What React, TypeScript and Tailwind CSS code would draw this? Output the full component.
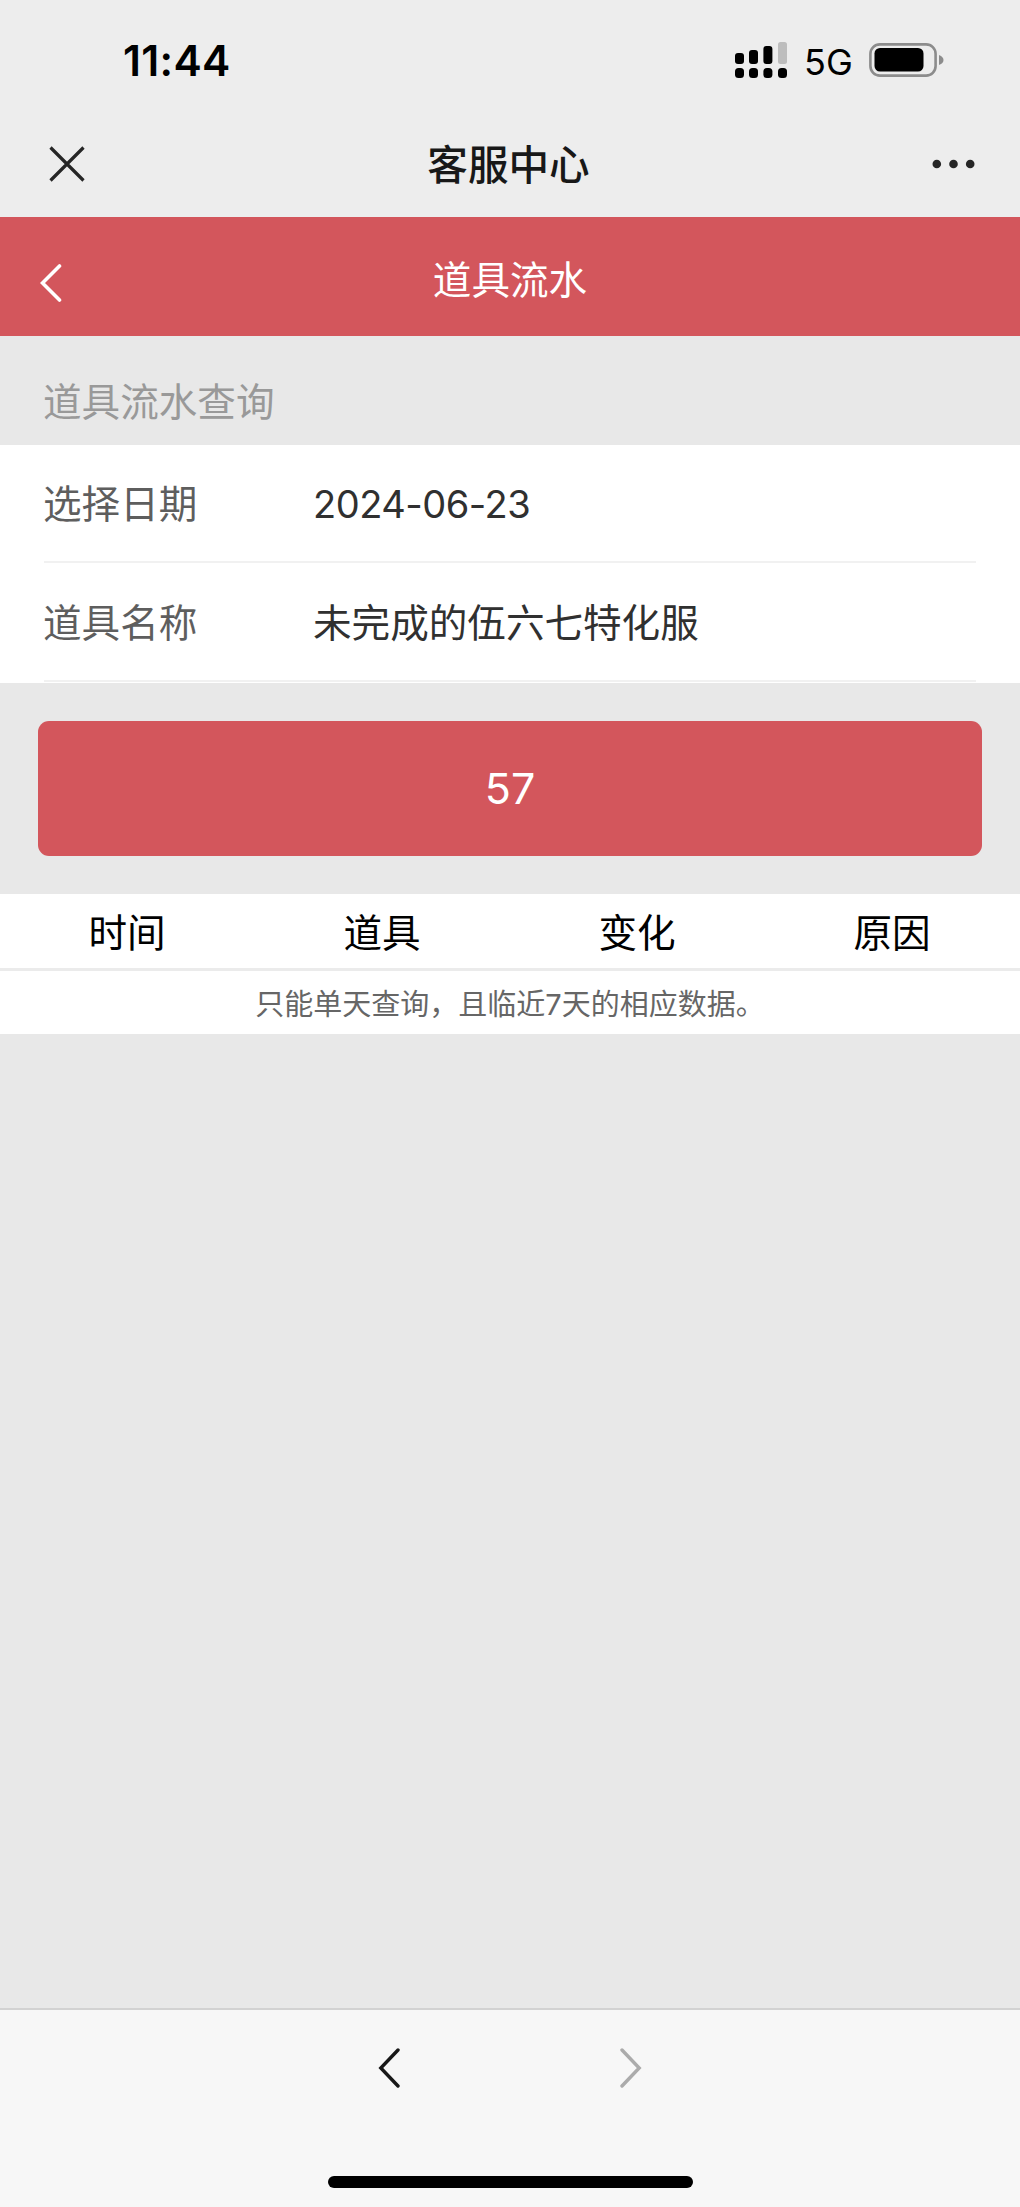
import clsx from "clsx";

const FIELDS = [
  { label: "选择日期", value: "2024-06-23", numeric: true },
  { label: "道具名称", value: "未完成的伍六七特化服", numeric: false },
];

const COLUMNS = ["时间", "道具", "变化", "原因"];

function StatusBar() {
  return (
    <div className="flex h-[112px] items-start justify-between pl-[123px] pr-[76px] pt-[36px]">
      <span className="text-[42.5px] font-semibold leading-[50px] tracking-[0.3px] text-black">11:44</span>

      <div className="flex items-start">
        {/* Dual SIM signal */}
        <svg width="52" height="36" viewBox="0 0 52 36" className="mt-[6px]">
          <rect x="0" y="11" width="9" height="11" rx="3" />
          <rect x="14" y="8" width="9" height="14" rx="3" />
          <rect x="28.4" y="4" width="9" height="18" rx="3" />
          <rect x="43" y="0" width="9" height="22" rx="2.5" fill="#bdbdbd" />
          <rect x="0" y="26" width="9" height="10" rx="3.5" />
          <rect x="14" y="26" width="9" height="10" rx="3.5" />
          <rect x="28.4" y="26" width="9" height="10" rx="3.5" />
          <rect x="43" y="26" width="9" height="10" rx="3.5" />
        </svg>
        <span className="ml-[17px] w-[65px] text-[36px] leading-[52px] text-black">5G</span>
        <svg width="75" height="34" viewBox="0 0 75 34" className="mt-[7px]">
          <rect x="1.4" y="1.4" width="65.2" height="31.2" rx="9.5" fill="none" stroke="#8c8c8c" strokeWidth="2.6" />
          <rect x="5.5" y="5" width="49" height="23.5" rx="5.5" />
          <path d="M70 12c3 1 4.5 3 4.5 5s-1.5 4-4.5 5z" fill="#8c8c8c" />
        </svg>
      </div>
    </div>
  );
}

function TitleBar() {
  return (
    <div className="flex h-[104px] items-center justify-between pl-[49px] pr-[45px]">
      <svg width="36" height="36" viewBox="0 0 36 36" fill="none" stroke="#262626" strokeWidth="3.2">
        <path d="M1.5 1.5 34.5 34.5M34.5 1.5 1.5 34.5" />
      </svg>
      <h1 className="pt-[3px] text-[40.6px] font-medium leading-[50px] text-[#181818]">客服中心</h1>
      <svg width="43" height="10" viewBox="0 0 43 10" fill="#262626">
        <circle cx="4.8" cy="5" r="4.3" />
        <circle cx="21.5" cy="5" r="4.3" />
        <circle cx="38.2" cy="5" r="4.3" />
      </svg>
    </div>
  );
}

function PageHeader() {
  return (
    <header className="flex h-[119px] items-center bg-[#d3565c] px-[40px] text-white">
      <svg width="22" height="38" viewBox="0 0 22 38" fill="none" stroke="currentColor" strokeWidth="3.6" strokeLinecap="round" className="mt-[13px]">
        <path d="M19.5 2 2.5 19 19.5 36" />
      </svg>
      <h2 className="mr-[22px] flex-1 pt-[7px] text-center text-[38.6px] leading-[50px]">道具流水</h2>
    </header>
  );
}

export default function App() {
  return (
    <div className="flex h-[2207px] w-[1020px] flex-col bg-[#e8e8e8] font-['Inter','Noto_Sans_CJK_SC',sans-serif]">
      <div className="h-[217px] bg-[#ededed]">
        <StatusBar />
        <TitleBar />
      </div>
      <PageHeader />

      <main className="flex-1">
        <p className="h-[109px] pl-[43px] pt-[41px] text-[38.6px] leading-[50px] text-[#999]">道具流水查询</p>

        <div className="h-[238px] bg-white px-[44px]">
          {FIELDS.map((field) => (
            <div
              key={field.label}
              className="flex h-[118px] items-center border-b-2 border-[#f1f1f1] pt-[4px] text-[38.6px] last:h-[119px]"
            >
              <span className="-ml-px w-[270px] text-[#5e5e5e]">{field.label}</span>
              <span className={clsx("text-[#303030]", field.numeric && "pb-[2px] text-[38px] tracking-[-0.5px]")}>
                {field.value}
              </span>
            </div>
          ))}
        </div>

        <div className="px-[38px] py-[38px]">
          <button className="block h-[135px] w-full rounded-[11px] bg-[#d3565c] text-[43px] text-white">57</button>
        </div>

        {/* Result table */}
        <section className="h-[140px] bg-white">
          <div className="grid h-[77px] grid-cols-4 items-center border-b-[3px] border-[#ebebeb] pt-[4px] text-center text-[38.6px] text-black">
            {COLUMNS.map((column) => (
              <span key={column} className="pr-px leading-[50px]">
                {column}
              </span>
            ))}
          </div>
          <p className="pt-[10px] text-center text-[29px] leading-[48px] text-[#666]">
            只能单天查询，且临近7天的相应数据。
          </p>
        </section>
      </main>

      <footer className="flex h-[199px] flex-col items-center border-t-2 border-[#d2d2d2] bg-[#f7f7f7]">
        <nav className="flex w-[264px] justify-between pt-[38px]">
          <svg width="22" height="40" viewBox="0 0 22 40" fill="none" stroke="#181818" strokeWidth="3.4" strokeLinecap="round">
            <path d="M20 2 2.8 20 20 38" />
          </svg>
          <svg width="22" height="40" viewBox="0 0 22 40" fill="none" stroke="#ababab" strokeWidth="3.4" strokeLinecap="round">
            <path d="M2 2 19.2 20 2 38" />
          </svg>
        </nav>
        <div className="mt-[88px] h-[12px] w-[365px] rounded-full bg-black" />
      </footer>
    </div>
  );
}
